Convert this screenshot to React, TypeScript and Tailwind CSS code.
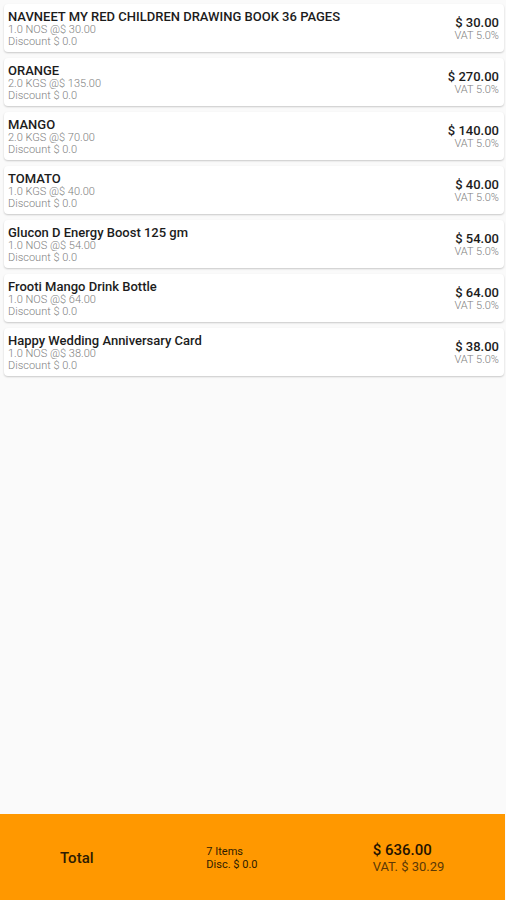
import React from 'react';

interface CartItem {
  name: string;
  quantity: string;
  discount: string;
  price: string;
  vat: string;
}

const items: CartItem[] = [
  { name: 'NAVNEET MY RED CHILDREN DRAWING BOOK 36 PAGES', quantity: '1.0 NOS @$ 30.00', discount: 'Discount $ 0.0', price: '$ 30.00', vat: 'VAT 5.0%' },
  { name: 'ORANGE', quantity: '2.0 KGS @$ 135.00', discount: 'Discount $ 0.0', price: '$ 270.00', vat: 'VAT 5.0%' },
  { name: 'MANGO', quantity: '2.0 KGS @$ 70.00', discount: 'Discount $ 0.0', price: '$ 140.00', vat: 'VAT 5.0%' },
  { name: 'TOMATO', quantity: '1.0 KGS @$ 40.00', discount: 'Discount $ 0.0', price: '$ 40.00', vat: 'VAT 5.0%' },
  { name: 'Glucon D Energy Boost 125 gm', quantity: '1.0 NOS @$ 54.00', discount: 'Discount $ 0.0', price: '$ 54.00', vat: 'VAT 5.0%' },
  { name: 'Frooti Mango Drink Bottle', quantity: '1.0 NOS @$ 64.00', discount: 'Discount $ 0.0', price: '$ 64.00', vat: 'VAT 5.0%' },
  { name: 'Happy Wedding Anniversary Card', quantity: '1.0 NOS @$ 38.00', discount: 'Discount $ 0.0', price: '$ 38.00', vat: 'VAT 5.0%' },
];

function ItemCard({ item }: { item: CartItem }) {
  return (
    <li className="flex items-center justify-between rounded-sm bg-white pt-1.5 pr-[5px] pb-1 pl-1 shadow-[0_1px_2px_rgba(0,0,0,0.2)]">
      <div>
        <h2 className="text-[13px] leading-[14px] font-medium text-[#1c1c1c]">{item.name}</h2>
        <p className="text-[11px] leading-[12px] font-light text-[#808080]">{item.quantity}</p>
        <p className="text-[11px] leading-[12px] font-light text-[#808080]">{item.discount}</p>
      </div>
      <div className="text-right">
        <p className="text-[13px] leading-[14px] font-medium text-[#1c1c1c]">{item.price}</p>
        <p className="text-[11px] leading-[12px] font-light text-[#808080]">{item.vat}</p>
      </div>
    </li>
  );
}

export default function App() {
  return (
    <div className="flex min-h-screen flex-col bg-[#fafafa] font-['Roboto',sans-serif]">
      <main className="flex-1 pt-1 pr-0.5 pl-1">
        <ul className="flex flex-col gap-1.5">
          {items.map((item) => (
            <ItemCard key={item.name} item={item} />
          ))}
        </ul>
      </main>

      <footer className="mr-px grid grid-cols-3 items-center bg-[#ff9800] pt-[27px] pb-[25px] text-[#2e1c02]">
        <div className="pl-15 text-[15px] leading-[18px] font-medium">Total</div>
        <div className="pl-[38px] text-[11px] leading-[13px]">
          <p>7 Items</p>
          <p>Disc. $ 0.0</p>
        </div>
        <div className="pl-9">
          <p className="text-[15px] leading-[18px] font-medium text-[#1f1300]">$ 636.00</p>
          <p className="text-[13px] leading-[16px] text-[#5c3906]">VAT. $ 30.29</p>
        </div>
      </footer>
    </div>
  );
}
